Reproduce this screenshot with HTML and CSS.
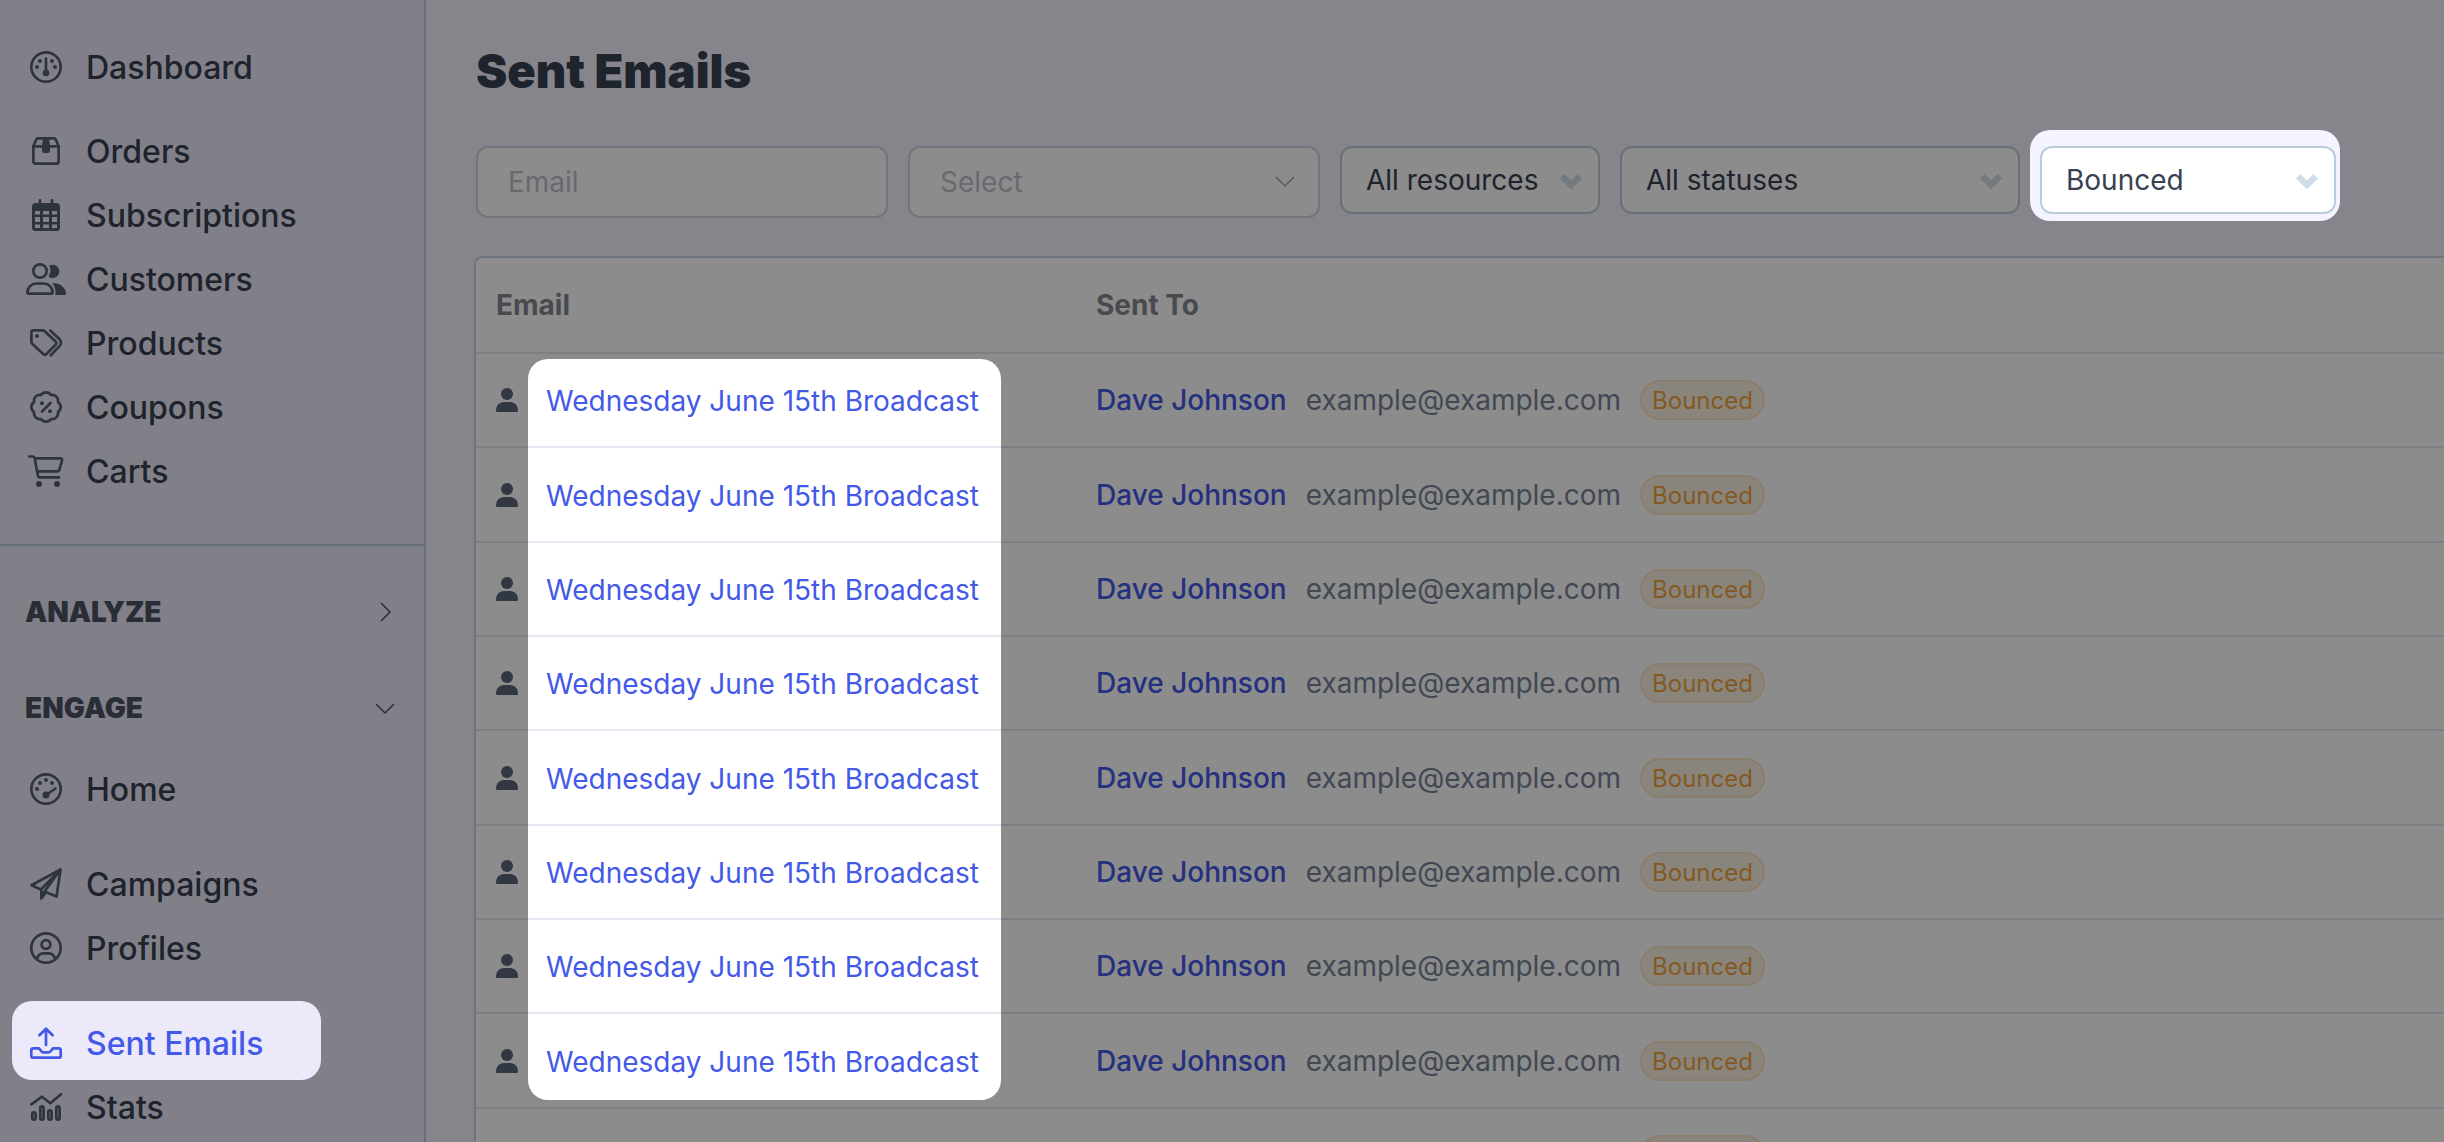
FILE: index.html
```html
<!DOCTYPE html>
<html lang="en">

<head>
    <meta charset="UTF-8">
    <meta name="viewport" content="width=device-width, initial-scale=1.0">
    <title>Sent Emails</title>
    <link rel="stylesheet" href="styles.css">
</head>

<body>

    <aside class="sidebar">
        <nav class="nav-main">
            <a class="nav-item" href="#">
                <svg class="icon" viewBox="0 0 40 32">
                    <circle cx="20" cy="16" r="14.7" />
                    <path d="M20 7.5V21" />
                    <g class="solid">
                        <circle cx="20" cy="22" r="3.3" />
                        <circle cx="14" cy="10" r="2" />
                        <circle cx="26" cy="10" r="2" />
                        <circle cx="11" cy="16" r="2" />
                        <circle cx="29" cy="16" r="2" />
                    </g>
                </svg>
                Dashboard
            </a>
            <div class="nav-group">
                <a class="nav-item" href="#">
                    <svg class="icon" viewBox="0 0 40 32">
                        <path d="M7.4 11.3V26.6a2 2 0 0 0 2 2h21.2a2 2 0 0 0 2-2V11.3z" />
                        <path d="M7.4 11.3l2.7-6.5c.4-1 1-1.5 2.1-1.5h15.6c1.1 0 1.7.5 2.1 1.5l2.7 6.5" />
                        <path class="solid" d="M17 3h6l1 8v4.5a2.5 2.5 0 0 1-2.5 2.5h-3a2.5 2.5 0 0 1-2.5-2.5V11z" />
                    </svg>
                    Orders
                </a>
                <a class="nav-item" href="#">
                    <svg class="icon" viewBox="0 0 40 32">
                        <path class="solid" fill-rule="evenodd"
                            d="M9.5 4h21A3.5 3.5 0 0 1 34 7.5v21a3.5 3.5 0 0 1-3.5 3.5h-21A3.5 3.5 0 0 1 6 28.5v-21A3.5 3.5 0 0 1 9.500 4zM9 12v3.5h5V12zM17 12v3.500h6V12zM26 12v3.5h5V12zM9 18v5h5v-5zM17 18v5h6v-5zM26 18v5h5v-5zM9 25.5V29h5v-3.5zM17 25.5V29h6v-3.5zM26 25.5V29h5v-3.5z" />
                        <path d="M14 1.4V6M26 1.4V6" />
                    </svg>
                    Subscriptions
                </a>
                <a class="nav-item" href="#">
                    <svg class="icon" viewBox="0 0 40 32">
                        <circle cx="14" cy="8" r="6.7" />
                        <path d="M1.4 29.5c0-5 4-9 9-9h7.2c5 0 9 4 9 9 0 .7-.4 1.1-1.1 1.1h-23c-.7 0-1.1-.4-1.1-1.1z" />
                        <path class="solid" d="M23.3 2.6A6.7 6.7 0 1 1 22.4 13.6A11 11 0 0 0 23.3 2.6z" />
                        <path class="solid" d="M26.3 20.3h2.2c6 0 11.5 5 11.5 10.5 0 .7-.5 1.2-1.2 1.2h-9.5c.8-4.5-.2-8.5-3-11.7z" />
                    </svg>
                    Customers
                </a>
                <a class="nav-item" href="#">
                    <svg class="icon" viewBox="0 0 40 32">
                        <path d="M5.4 5.5c0-1.2.9-2.1 2.1-2.1h9c1 0 1.8.4 2.5 1.1l10.6 10.1c1 1 1 2.2 0 3.2l-9.2 9.2c-1 1-2.2 1-3.2 0L6.5 17c-.7-.7-1.1-1.5-1.1-2.5z" />
                        <path d="M24.3 3.4l9 8.6c2.2 2.2 2.2 5.2 0 7.4l-8.5 8.9" />
                        <circle class="solid" cx="11" cy="9" r="2" />
                    </svg>
                    Products
                </a>
                <a class="nav-item" href="#">
                    <svg class="icon" viewBox="0 0 40 32">
                        <path d="M15 4A6 6 0 0 1 25 4A6 6 0 0 1 32 11A6 6 0 0 1 32 21A6 6 0 0 1 25 28A6 6 0 0 1 15 28A6 6 0 0 1 8 21A6 6 0 0 1 8 11A6 6 0 0 1 15 4z" />
                        <path d="M16 20.5l8.5-8.5" />
                        <circle class="solid" cx="16" cy="12.3" r="2" />
                        <circle class="solid" cx="24" cy="20.3" r="2" />
                    </svg>
                    Coupons
                </a>
                <a class="nav-item" href="#">
                    <svg class="icon" viewBox="0 0 40 32">
                        <path d="M3.3 1.5h3.4c1 0 1.7.6 1.9 1.6l3.2 17c.3 1.4 1 2.3 2.6 2.3H33" />
                        <path d="M9 3.4h25.5c1.2 0 1.9.8 1.6 1.9l-2.6 9c-.3 1.2-1 2-2.3 2H11.5" />
                        <circle class="solid" cx="13" cy="29" r="3" />
                        <circle class="solid" cx="31" cy="29" r="3" />
                    </svg>
                    Carts
                </a>
            </div>
        </nav>

        <button class="section-head" type="button">
            ANALYZE
            <svg class="chevron" viewBox="0 0 20 20">
                <path d="M6 1l9 9-9 9" />
            </svg>
        </button>
        <button class="section-head" type="button">
            ENGAGE
            <svg class="chevron" viewBox="0 0 20 20">
                <path d="M1 6l9 9 9-9" />
            </svg>
        </button>

        <nav class="nav-engage">
            <a class="nav-item" href="#">
                <svg class="icon" viewBox="0 0 40 32">
                    <circle cx="20" cy="16" r="14.7" />
                    <path d="M20 22l9.5-6.5" />
                    <g class="solid">
                        <circle cx="20" cy="22" r="3.5" />
                        <circle cx="11" cy="16" r="2" />
                        <circle cx="14" cy="10" r="2" />
                        <circle cx="20" cy="7" r="2" />
                        <circle cx="26" cy="10" r="2" />
                    </g>
                </svg>
                Home
            </a>
            <div class="nav-group">
                <a class="nav-item" href="#">
                    <svg class="icon" viewBox="0 0 40 32">
                        <path d="M34.5 1.5L5.5 17.3l9.5 4.2L34.5 1.5zM34.5 1.5L18.5 23.5l12 5z" />
                        <path class="solid" d="M14 21.5v9c0 1.4 1.5 1.9 2.5.8l4.5-6.3z" />
                    </svg>
                    Campaigns
                </a>
                <a class="nav-item" href="#">
                    <svg class="icon" viewBox="0 0 40 32">
                        <circle cx="20" cy="16" r="14.7" />
                        <circle cx="20" cy="12.5" r="4.4" />
                        <path d="M11 27c.8-3.600 3-5.700 6.3-5.7h5.4c3.3 0 5.5 2.1 6.3 5.7" />
                    </svg>
                    Profiles
                </a>
            </div>
            <div class="nav-group">
                <a class="nav-item active" href="#">
                    <svg class="icon" viewBox="0 0 40 32">
                        <path d="M20 18V2M13.4 8.3L20 1.7l6.6 6.6" />
                        <path d="M5.3 23.3a2 2 0 0 1 2-2h5.7l2.5 3c.7.8 1.3 1.1 2 1.1h5c.8 0 1.4-.3 2-1.1l2.5-3h5.7a2 2 0 0 1 2 2v5.4a2 2 0 0 1-2 2H7.3a2 2 0 0 1-2-2z" />
                    </svg>
                    Sent Emails
                </a>
                <a class="nav-item" href="#">
                    <svg class="icon" viewBox="0 0 40 32">
                        <path d="M5.3 13.3L16 5.7l8.3 6.6L35 3.3" />
                        <rect x="6.3" y="21.3" width="3.3" height="7.4" rx="1.6" />
                        <rect x="14.3" y="15.3" width="3.3" height="13.4" rx="1.6" />
                        <rect x="22.3" y="19.3" width="3.3" height="9.4" rx="1.6" />
                        <rect x="30.3" y="15.3" width="3.3" height="13.4" rx="1.6" />
                    </svg>
                    Stats
                </a>
            </div>
        </nav>
    </aside>

    <main class="content">
        <h1>Sent Emails</h1>

        <form class="filters">
            <input class="field field-tall" type="text" placeholder="Email" aria-label="Email">
            <div class="select-wrap search">
                <select class="field field-tall empty" aria-label="Email template">
                    <option>Select</option>
                </select>
                <svg class="chevron" viewBox="0 0 20 20">
                    <path d="M1 5l9 9 9-9" />
                </svg>
            </div>
            <div class="select-wrap resources">
                <select class="field" aria-label="Resource">
                    <option>All resources</option>
                </select>
                <svg class="arrow" viewBox="0 0 22 16">
                    <path d="M0 4.500L4.500 0 11 6.500 17.500 0 22 4.500 11 15.500z" />
                </svg>
            </div>
            <div class="select-wrap statuses">
                <select class="field" aria-label="Status">
                    <option>All statuses</option>
                </select>
                <svg class="arrow" viewBox="0 0 22 16">
                    <path d="M0 4.500L4.500 0 11 6.500 17.500 0 22 4.500 11 15.500z" />
                </svg>
            </div>
            <div class="select-wrap delivery">
                <select class="field" aria-label="Delivery">
                    <option>Bounced</option>
                </select>
                <svg class="arrow" viewBox="0 0 22 16">
                    <path d="M0 4.500L4.500 0 11 6.500 17.500 0 22 4.500 11 15.500z" />
                </svg>
            </div>
        </form>

        <div class="card">
            <table class="emails">
                <thead>
                    <tr>
                        <th class="col-email">Email</th>
                        <th>Sent To</th>
                    </tr>
                </thead>
                <tbody id="rows"></tbody>
            </table>
        </div>
    </main>

    <!-- Dims the page except for the highlighted parts -->
    <svg class="spotlight" aria-hidden="true">
        <mask id="holes">
            <rect width="100%" height="100%" fill="#fff" />
            <rect x="12" y="1001" width="309" height="79" rx="20" />
            <rect x="2030" y="130" width="310" height="91" rx="20" />
            <rect x="528" y="359" width="473" height="741" rx="20" />
        </mask>
        <rect width="100%" height="100%" mask="url(#holes)" />
    </svg>

    <script>
        const row = `
            <tr>
                <td>
                    <div class="cell">
                        <svg class="person" viewBox="0 0 22 24">
                            <circle cx="11" cy="6" r="6" />
                            <path d="M0 22.5C0 17.5 3.5 14 8 14h6c4.5 0 8 3.5 8 8.5 0 1-.5 1.5-1.5 1.5h-19C.5 24 0 23.5 0 22.5z" />
                        </svg>
                        <a class="broadcast" href="#">Wednesday June 15th Broadcast</a>
                    </div>
                </td>
                <td>
                    <div class="cell">
                        <a class="name" href="#">Dave Johnson</a>
                        <span class="address">example@example.com</span>
                        <span class="badge">Bounced</span>
                    </div>
                </td>
            </tr>`;

        document.getElementById('rows').innerHTML = row.repeat(9);
    </script>

</body>

</html>
```
FILE: styles.css
```css
* {
    box-sizing: border-box;
    margin: 0;
    padding: 0;
    font-family: Inter, "Liberation Sans", sans-serif;
}

body {
    display: flex;
    height: 100vh;
    background-color: #f5f3ff;
    color: #374151;
    font-size: 28px;
    overflow: hidden;
}

a {
    color: #4459e8;
    text-decoration: none;
}

/* Sidebar */
.sidebar {
    flex: none;
    width: 426px;
    background-color: #ebe9fa;
    border-right: 2px solid #b8ccd8;
}

.nav-main {
    padding: 35px 0 41px;
    margin-bottom: 18px;
    border-bottom: 2px solid #b8ccd8;
}

.nav-main .nav-group {
    margin-top: 20px;
}

.nav-engage {
    padding-top: 1px;
}

.nav-engage .nav-group {
    margin-top: 31px;
}

.nav-item {
    display: flex;
    align-items: center;
    gap: 20px;
    height: 64px;
    padding-left: 26px;
    color: #374151;
    font-size: 32px;
    font-weight: 500;
}

.nav-group .nav-item.active,
.nav-item.active .icon {
    color: #4459e8;
}

.icon {
    flex: none;
    width: 40px;
    height: 32px;
    color: #55606f;
    fill: none;
    stroke: currentColor;
    stroke-width: 2.7;
    stroke-linecap: round;
    stroke-linejoin: round;
    overflow: visible;
}

.icon .solid {
    fill: currentColor;
    stroke: none;
}

.section-head {
    display: flex;
    align-items: center;
    justify-content: space-between;
    width: 100%;
    height: 96px;
    padding: 0 29px 0 25px;
    background: none;
    border: none;
    color: #4b5563;
    font-size: 28px;
    font-weight: 900;
}

.chevron {
    width: 20px;
    height: 20px;
    fill: none;
    stroke: currentColor;
    stroke-width: 1.5;
}

/* Content */
.content {
    flex: 1;
    min-width: 0;
    padding-left: 50px;
}

h1 {
    margin: 41px 0 45px;
    font-size: 47px;
    line-height: 60px;
    font-weight: 900;
}

.filters {
    display: flex;
    align-items: flex-start;
    gap: 20px;
    margin-bottom: 38px;
}

.field {
    display: block;
    width: 100%;
    height: 68px;
    padding: 0 24px;
    background-color: #fff;
    border: 2px solid #b8ccdb;
    border-radius: 12px;
    color: #374151;
    font-size: 28px;
    appearance: none;
}

.field-tall {
    width: 412px;
    height: 72px;
    padding: 0 30px;
    border-color: #cbd5e1;
}

.field::placeholder,
.field.empty {
    color: #bfc0cc;
    opacity: 1;
}

.select-wrap {
    position: relative;
}

.resources {
    width: 260px;
}

.statuses {
    width: 400px;
}

.delivery {
    width: 296px;
}

.select-wrap svg {
    position: absolute;
    top: 28px;
    right: 18px;
    pointer-events: none;
}

.select-wrap .chevron {
    top: 26px;
    right: 25px;
    color: #a3a5b0;
}

.arrow {
    width: 22px;
    height: 16px;
    fill: #d0dde8;
}

.card {
    margin-left: -2px;
    background-color: #fff;
    border: 2px solid #c8d4e0;
    border-right: none;
    border-radius: 8px 0 0 0;
}

.emails {
    width: 100%;
    table-layout: fixed;
    border-collapse: separate;
    border-spacing: 0;
}

.emails th,
.emails td {
    height: 94px;
    padding: 0 20px;
    border-bottom: 2px solid #e5e8f0;
    text-align: left;
}

.emails th {
    height: 96px;
    color: #868890;
    font-weight: 700;
}

/* 94px rows with every third one a pixel taller */
.emails tr:nth-child(3n+2) td {
    height: 95px;
}

.emails .col-email {
    width: 600px;
}

.cell {
    display: flex;
    align-items: center;
}

.person {
    width: 22px;
    height: 24px;
    margin-right: 28px;
    fill: #5b667a;
}

.broadcast {
    padding-top: 2px;
}

.name {
    font-weight: 500;
}

.address {
    margin: 0 19px;
    color: #778497;
}

.badge {
    height: 40px;
    padding: 0 10px;
    background-color: #fcf3e2;
    border: 2px solid #fbe4c2;
    border-radius: 20px;
    color: #f0a33e;
    font-size: 24px;
    line-height: 37px;
}

/* Dimming layer */
.spotlight {
    position: absolute;
    top: 0;
    left: 0;
    width: 100%;
    height: 100%;
    fill: #000;
    pointer-events: none;
}

.spotlight > rect {
    fill-opacity: 0.45;
}
```
